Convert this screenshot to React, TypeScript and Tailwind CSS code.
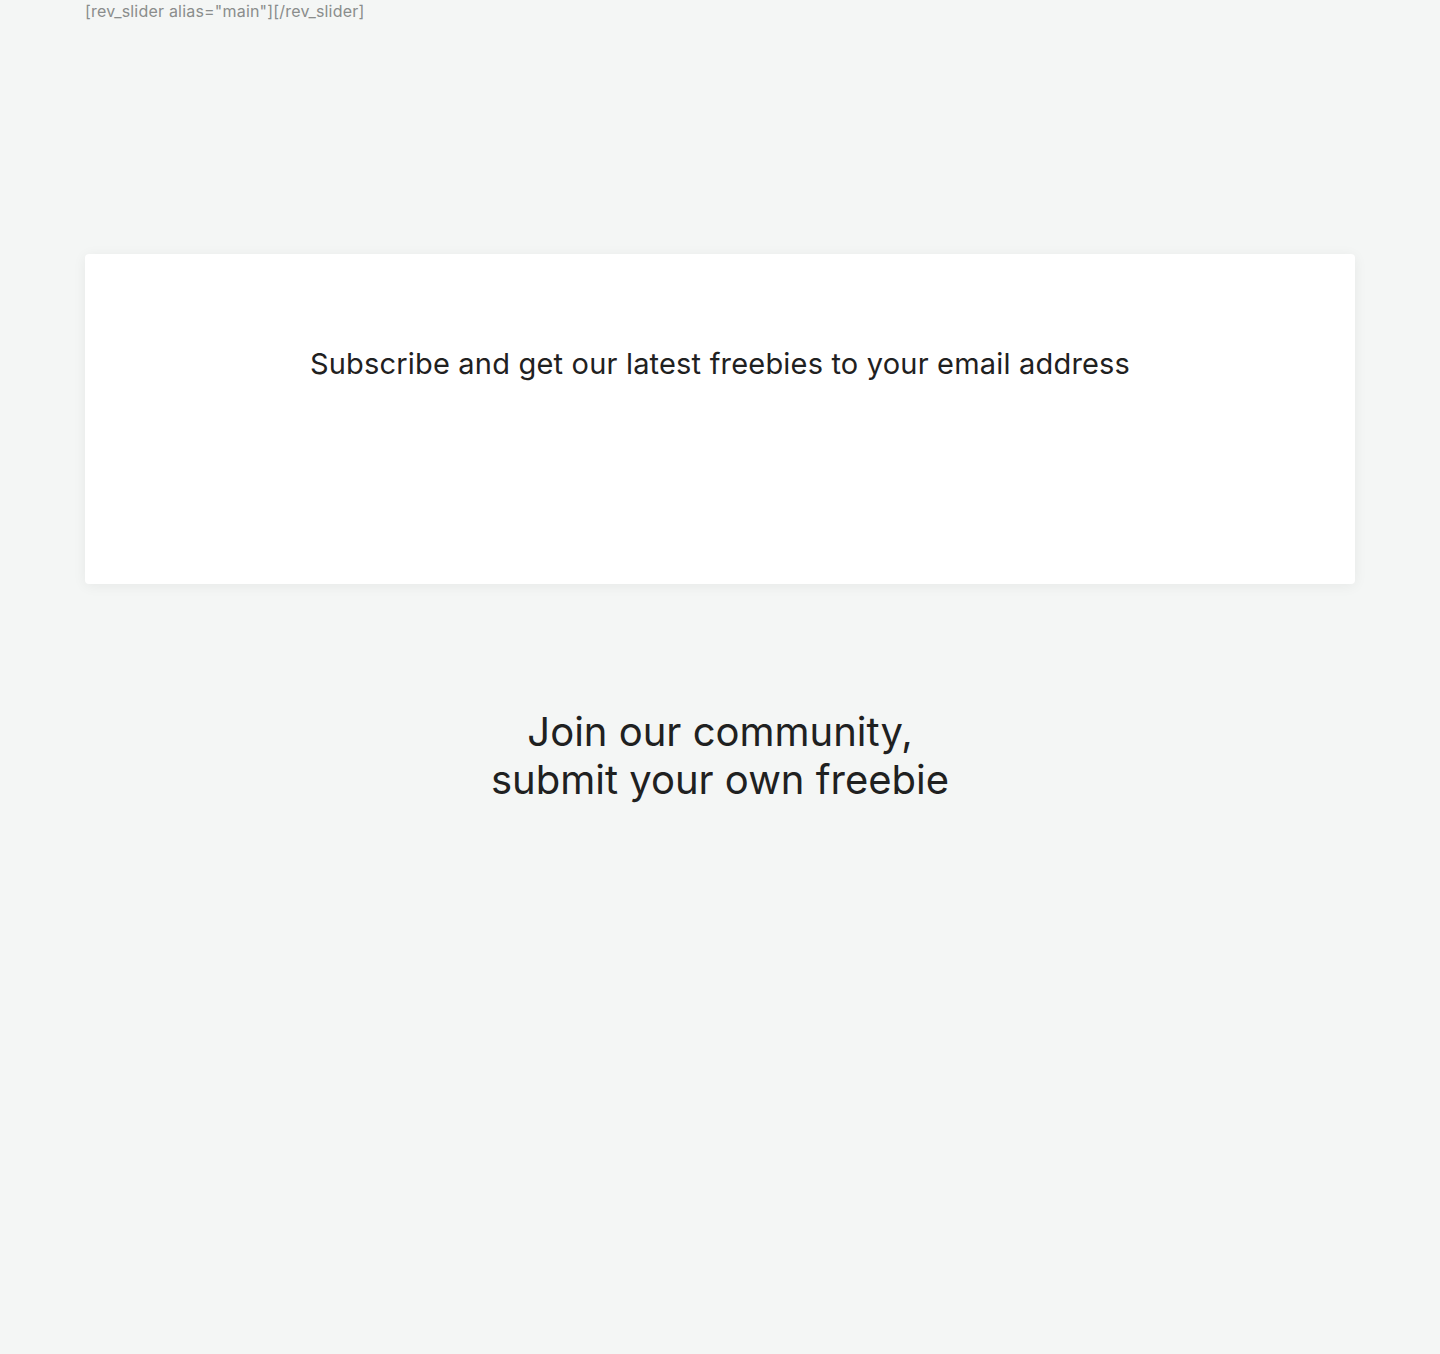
import React from 'react';

export default function App() {
  return (
    <div
      className="min-h-[1354px] bg-[#f4f6f5] text-[#1f2121]"
      style={{ fontFamily: 'Inter, "Noto Sans", sans-serif' }}
    >
      <div className="mx-auto w-[1270px]">
        <p className="text-[16px] leading-[22px] tracking-[0.2px] text-[#8a8d8c]">
          [rev_slider alias="main"][/rev_slider]
        </p>

        <div className="mt-[232px] h-[330px] rounded-[4px] bg-white shadow-[0_2px_14px_rgba(0,0,0,0.06)] pt-[90px]">
          <h3 className="text-center text-[29px] leading-[40px] tracking-[0.19px] font-normal">
            Subscribe and get our latest freebies to your email address
          </h3>
        </div>

        <div className="pt-[124px] text-center">
          <h2 className="text-[40px] leading-[48px] font-normal">
            Join our community,
            <br />
            submit your own freebie
          </h2>
        </div>
      </div>
    </div>
  );
}
